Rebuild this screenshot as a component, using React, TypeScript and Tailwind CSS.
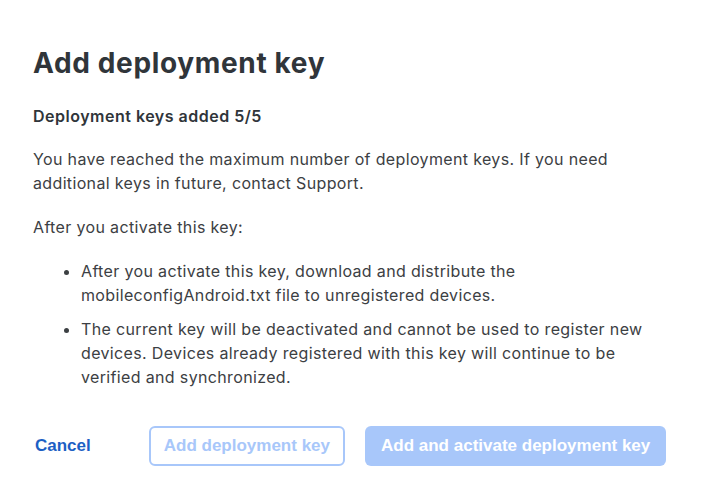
import React from 'react';

const bodyFont = { fontFamily: 'Inter, "Noto Sans", sans-serif' };

export default function App() {
  return (
    <div className="min-h-screen w-[718px] bg-white text-[#3c4043]" style={bodyFont}>
      <div className="px-[33px] pt-[45px]">
        <h1 className="text-[28px] leading-[36px] font-bold text-[#30353a] tracking-[0.65px]">
          Add deployment key
        </h1>

        <h2 className="mt-[23px] text-[16px] leading-[24px] font-semibold text-[#30353a] tracking-[0.5px]">
          Deployment keys added 5/5
        </h2>

        <div className="text-[16px] tracking-[0.35px] leading-[24px]">
          <p className="mt-[19px]">
            You have reached the maximum number of deployment keys. If you need
            <br />
            additional keys in future, contact Support.
          </p>

          <p className="mt-[20px]">After you activate this key:</p>

          <ul className="mt-[20px] list-disc pl-[48px] space-y-[10px]">
            <li>
              After you activate this key, download and distribute the
              <br />
              mobileconfigAndroid.txt file to unregistered devices.
            </li>
            <li>
              The current key will be deactivated and cannot be used to register new
              <br />
              devices. Devices already registered with this key will continue to be
              <br />
              verified and synchronized.
            </li>
          </ul>
        </div>

        <div
          className="mt-[37px] flex items-center"
          style={{ fontFamily: '"Liberation Sans", Arial, sans-serif' }}
        >
          <button className="ml-[2px] text-[17px] font-bold text-[#1d5fc4]">Cancel</button>
          <button
            disabled
            className="ml-[58px] h-[40px] px-[13px] rounded-[6px] border-2 border-[#a8c7fa] bg-white text-[17px] font-bold text-[#a8c7fa]"
          >
            Add deployment key
          </button>
          <button
            disabled
            className="ml-[20px] h-[40px] px-[16px] rounded-[6px] bg-[#a8c7fa] text-[17px] font-bold text-white"
          >
            Add and activate deployment key
          </button>
        </div>
      </div>
    </div>
  );
}
